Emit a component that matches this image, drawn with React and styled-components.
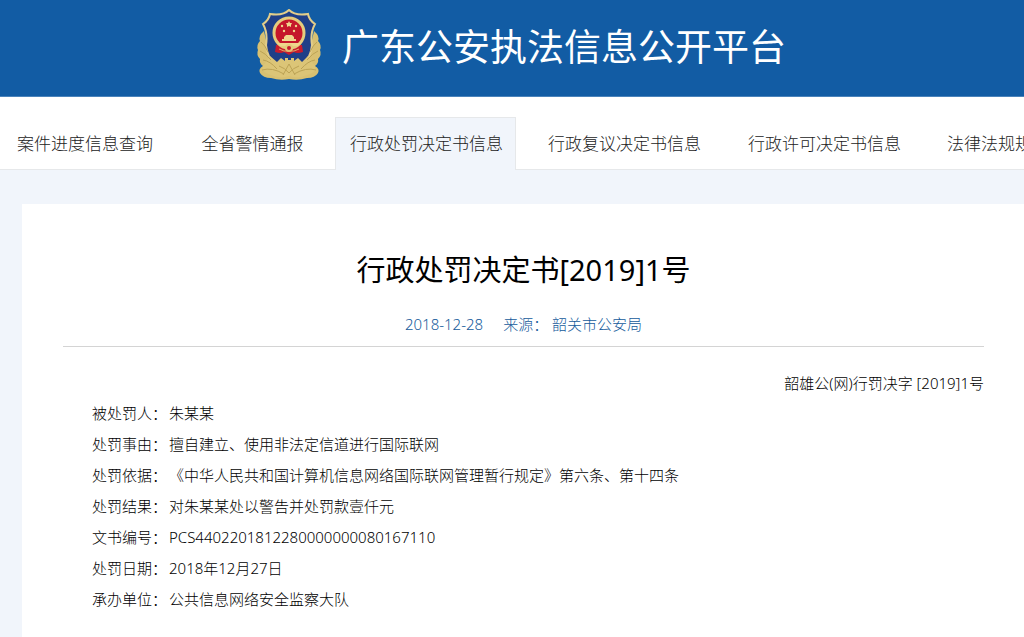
import React from "react";
import styled, { createGlobalStyle } from "styled-components";

const GlobalStyle = createGlobalStyle`
  * {
    box-sizing: border-box;
  }

  body {
    margin: 0;
    background: #f1f5fb;
    color: #000;
    font-family: "Noto Sans", "Noto Sans CJK SC", sans-serif;
    font-size: 15px;
    font-weight: 300;
    overflow-x: hidden;
  }
`;

const Header = styled.header`
  display: flex;
  align-items: center;
  justify-content: center;
  gap: 20px;
  height: 97px;
  padding: 0 2px 6px 20px;
  background: #125ca4;
  border-bottom: 1px solid #4a83bb;
`;

const SiteName = styled.h1`
  margin: 0;
  padding-top: 4px;
  color: #fff;
  font-size: 37px;
  font-weight: 400;
  line-height: 56px;
  white-space: nowrap;
`;

const Nav = styled.nav`
  display: flex;
  height: 73px;
  padding-top: 20px;
  overflow: hidden;
  background: #fff;
  box-shadow: inset 0 -1px #e6e8ea;
`;

const Tab = styled.a`
  flex: none;
  width: ${({ $width }) => $width}px;
  padding: 0 14px;
  border: 1px solid ${({ $active }) => ($active ? "#e6e8ea" : "transparent")};
  border-bottom: 0;
  background: ${({ $active }) => ($active ? "#f1f5fb" : "transparent")};
  color: #222;
  font-size: 17px;
  line-height: 52px;
  text-align: center;
  text-decoration: none;
  white-space: nowrap;
`;

const Sheet = styled.main`
  min-height: 433px;
  margin: 34px 0 0 22px;
  padding: 42px 40px 20px 41px;
  background: #fff;
`;

const Title = styled.h2`
  margin: 0;
  color: #000;
  font-size: 29px;
  font-weight: 400;
  line-height: 48px;
  text-align: center;
`;

const Meta = styled.div`
  display: flex;
  justify-content: center;
  gap: 20px;
  padding: 20px 0 12px;
  border-bottom: 1px solid #d4d4d4;
  color: #145a9b;
  line-height: 20px;
`;

const DocNumber = styled.p`
  margin: 21px 0 0;
  line-height: 30px;
  text-align: right;
`;

const Details = styled.dl`
  margin: 0;
  padding-left: 29px;
`;

const Row = styled.div`
  display: grid;
  grid-template-columns: 77px 1fr;
  line-height: 31px;
`;

const Value = styled.dd`
  margin: 0;
`;

const tabs = [
  { name: "案件进度信息查询", width: 170 },
  { name: "全省警情通报", width: 165 },
  { name: "行政处罚决定书信息", width: 181, active: true },
  { name: "行政复议决定书信息", width: 217 },
  { name: "行政许可决定书信息", width: 181 },
  { name: "法律法规规章", width: 168 },
];

const details = [
  ["被处罚人：", "朱某某"],
  ["处罚事由：", "擅自建立、使用非法定信道进行国际联网"],
  [
    "处罚依据：",
    "《中华人民共和国计算机信息网络国际联网管理暂行规定》第六条、第十四条",
  ],
  ["处罚结果：", "对朱某某处以警告并处罚款壹仟元"],
  ["文书编号：", "PCS4402201812280000000080167110"],
  ["处罚日期：", "2018年12月27日"],
  ["承办单位：", "公共信息网络安全监察大队"],
];

function Emblem() {
  return (
    <svg width="66" height="72" viewBox="0 0 66 72" aria-hidden="true">
      {/* pine branches */}
      <path
        d="M8 22 Q2 27 4 32 Q0 36 2 41 Q0 46 4 50 Q3 54 7 57 Q2 60 4 64 Q7 69 15 69 Q24 72 33 70 Q42 72 51 69 Q59 69 62 64 Q64 60 59 57 Q63 54 62 50 Q66 46 64 41 Q66 36 62 32 Q64 27 58 22 L52 50 H14Z"
        fill="#d8c071"
      />
      {/* shield */}
      <path
        d="M33 1 Q39 7 52 5 Q53 11 59 15 Q54 24 56 36 Q55 49 46 55 H20 Q11 49 10 36 Q12 24 7 15 Q13 11 14 5 Q27 7 33 1Z"
        fill="#1f3f88"
        stroke="#e2cd8a"
        strokeWidth="2"
      />
      {/* lower wall and branch tips */}
      <path
        d="M14 47 L21 53 L25 49 L29 52 V49 H32 V51 H35 V49 H38 V52 L42 49 L46 53 L52 47 Q56 53 59 57 Q62 63 51 66 Q42 70 33 67 Q24 70 15 66 Q4 63 7 57 Q10 53 14 47Z"
        fill="#dcc577"
      />
      <g fill="none" stroke="#bca355" strokeWidth="1">
        <path d="M5 33 Q9 36 12 43 M4 42 Q9 44 15 51 M7 51 Q14 52 21 60 M6 61 Q16 58 28 65" />
        <path d="M61 33 Q57 36 54 43 M62 42 Q57 44 51 51 M59 51 Q52 52 45 60 M60 61 Q50 58 38 65" />
        <path d="M33 55 L27 66 M33 55 L39 66 M23 57 Q29 59 33 64 Q37 59 43 57" />
      </g>
      {/* national emblem */}
      <path d="M20 36 H46 L47 43 Q41 45 38 43 L33 46 L28 43 Q25 45 19 43Z" fill="#c71b2d" />
      <circle cx="33" cy="24" r="15" fill="#c5162b" stroke="#e5cb7d" strokeWidth="3" />
      <path
        d="M33 12 L34 14 H36 L35 16 L35 18 L33 17 L31 18 L31 16 L30 14 H32Z"
        fill="#efd68d"
      />
      <g fill="#efd68d">
        <circle cx="26" cy="17" r="1.2" />
        <circle cx="40" cy="17" r="1.2" />
        <circle cx="28" cy="22" r="1.2" />
        <circle cx="38" cy="22" r="1.2" />
        <path d="M28 28 L30 26 H36 L38 28 V30 H40 V32 H26 V30 H28Z" />
        <path d="M21 34 H45 L42 37 H24Z" />
      </g>
      <circle cx="33" cy="39" r="4" fill="#e5cb7d" />
      <circle cx="33" cy="39" r="2" fill="#c71b2d" />
      <path d="M23 40 Q28 43 33 42 Q38 43 43 40" fill="none" stroke="#e0aa67" />
    </svg>
  );
}

function App() {
  return (
    <>
      <GlobalStyle />
      <Header>
        <Emblem />
        <SiteName>广东公安执法信息公开平台</SiteName>
      </Header>
      <Nav>
        {tabs.map(({ name, width, active }) => (
          <Tab key={name} href="#" $width={width} $active={active}>
            {name}
          </Tab>
        ))}
      </Nav>
      <Sheet>
        <Title>行政处罚决定书[2019]1号</Title>
        <Meta>
          <span>2018-12-28</span>
          <span>来源： 韶关市公安局</span>
        </Meta>
        <DocNumber>韶雄公(网)行罚决字 [2019]1号</DocNumber>
        <Details>
          {details.map(([label, value]) => (
            <Row key={label}>
              <dt>{label}</dt>
              <Value>{value}</Value>
            </Row>
          ))}
        </Details>
      </Sheet>
    </>
  );
}

export default App;
